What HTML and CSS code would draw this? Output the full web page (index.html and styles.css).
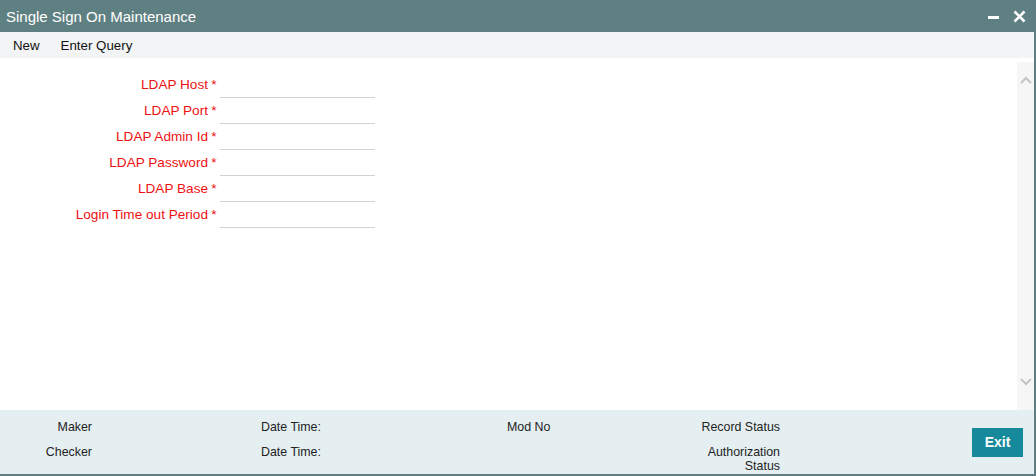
FILE: index.html
```html
<!DOCTYPE html>
<html>
	<head>
		<meta charset="UTF-8">
		<title>Single Sign On Maintenance</title>
		<link rel="stylesheet" href="styles.css">
	</head>
	<body>
		<div class="window">
			<div class="title-bar">
				<span class="title">Single Sign On Maintenance</span>
				<div class="win-btns">
					<span class="win-min"></span>
					<svg class="win-close" width="13" height="13" viewBox="0 0 13 13">
						<path d="M1.5 1.5 L11.5 11.5 M11.5 1.5 L1.5 11.5" stroke="#fff" stroke-width="2.6" />
					</svg>
				</div>
			</div>
			<div class="toolbar">
				<a class="tool">New</a>
				<a class="tool">Enter Query</a>
			</div>
			<div class="main">
				<div class="form">
					<div class="form-row">
						<label>LDAP Host</label><span class="req">*</span><input class="field" type="text">
					</div>
					<div class="form-row">
						<label>LDAP Port</label><span class="req">*</span><input class="field" type="text">
					</div>
					<div class="form-row">
						<label>LDAP Admin Id</label><span class="req">*</span><input class="field" type="text">
					</div>
					<div class="form-row">
						<label>LDAP Password</label><span class="req">*</span><input class="field" type="password">
					</div>
					<div class="form-row">
						<label>LDAP Base</label><span class="req">*</span><input class="field" type="text">
					</div>
					<div class="form-row">
						<label>Login Time out Period</label><span class="req">*</span><input class="field" type="text">
					</div>
				</div>
				<div class="scroll">
					<svg width="12" height="8" viewBox="0 0 12 8">
						<path d="M1 7 L6 2 L11 7" fill="none" stroke="#c4c4c4" stroke-width="2" />
					</svg>
					<svg width="12" height="8" viewBox="0 0 12 8">
						<path d="M1 1 L6 6 L11 1" fill="none" stroke="#c4c4c4" stroke-width="2" />
					</svg>
				</div>
			</div>
			<div class="footer">
				<div class="audit">
					<div class="audit-row">
						<span class="a-label">Maker</span>
						<span class="a-date">Date Time:</span>
						<span class="a-mod">Mod No</span>
						<span class="a-status">Record Status</span>
					</div>
					<div class="audit-row">
						<span class="a-label">Checker</span>
						<span class="a-date">Date Time:</span>
						<span class="a-mod"></span>
						<span class="a-status">Authorization Status</span>
					</div>
				</div>
				<input class="exit" type="button" value="Exit" />
			</div>
		</div>
	</body>
</html>
```

FILE: styles.css
```css
* {
	box-sizing: border-box;
}

body {
	margin: 0;
	font-family: "Liberation Sans", Arial, sans-serif;
	font-size: 13px;
	color: #222;
}

.window {
	width: 1036px;
	height: 476px;
	display: flex;
	flex-direction: column;
	border-right: 2px solid #5e7f81;
	border-bottom: 2px solid #5e7f81;
	background-color: #fff;
}

.title-bar {
	height: 32px;
	background-color: #5f8082;
	display: flex;
	align-items: center;
	justify-content: space-between;
	padding: 0 8px 0 6px;
}

.title {
	color: #fff;
	font-size: 15px;
}

.win-btns {
	display: flex;
	align-items: center;
	gap: 14px;
}

.win-min {
	width: 11px;
	height: 3px;
	background-color: #fff;
	margin-top: 2px;
}

.toolbar {
	height: 26px;
	background-color: #f3f4f5;
	display: flex;
	align-items: center;
	padding-left: 13px;
	gap: 21px;
}

.tool {
	color: #111;
	font-size: 13.3px;
}

.main {
	flex: 1;
	display: flex;
}

.form {
	flex: 1;
	padding-top: 14px;
}

.form-row {
	display: flex;
	height: 26px;
	align-items: center;
}

.form-row label {
	width: 208px;
	text-align: right;
	color: #ee1111;
	font-size: 13.6px;
	padding-bottom: 2px;
}

.req {
	width: 12px;
	text-align: center;
	color: #ee1111;
	font-size: 13.6px;
	padding-bottom: 2px;
}

.field {
	width: 155px;
	height: 26px;
	border: none;
	border-bottom: 1px solid #d3d3d3;
	outline: none;
	font-family: inherit;
	font-size: 13px;
}

.scroll {
	width: 17px;
	background-color: #f6f6f6;
	display: flex;
	flex-direction: column;
	justify-content: space-between;
	align-items: center;
	padding: 14px 0 24px;
	margin-top: 4px;
}

.footer {
	height: 64px;
	background-color: #e5eff2;
	display: flex;
	align-items: center;
	justify-content: space-between;
	padding-right: 11px;
}

.audit {
	align-self: flex-start;
	padding-top: 10px;
	font-size: 12.4px;
}

.audit-row {
	display: flex;
	min-height: 25px;
	color: #222;
}

.a-label {
	width: 92px;
	text-align: right;
}

.a-date {
	width: 246px;
	margin-left: 169px;
}

.a-mod {
	width: 187px;
}

.a-status {
	width: 86px;
	text-align: right;
	line-height: 14px;
}

.exit {
	width: 51px;
	height: 29px;
	background-color: #16899b;
	color: #fff;
	border: none;
	font-family: inherit;
	font-size: 14px;
	font-weight: bold;
}
```
